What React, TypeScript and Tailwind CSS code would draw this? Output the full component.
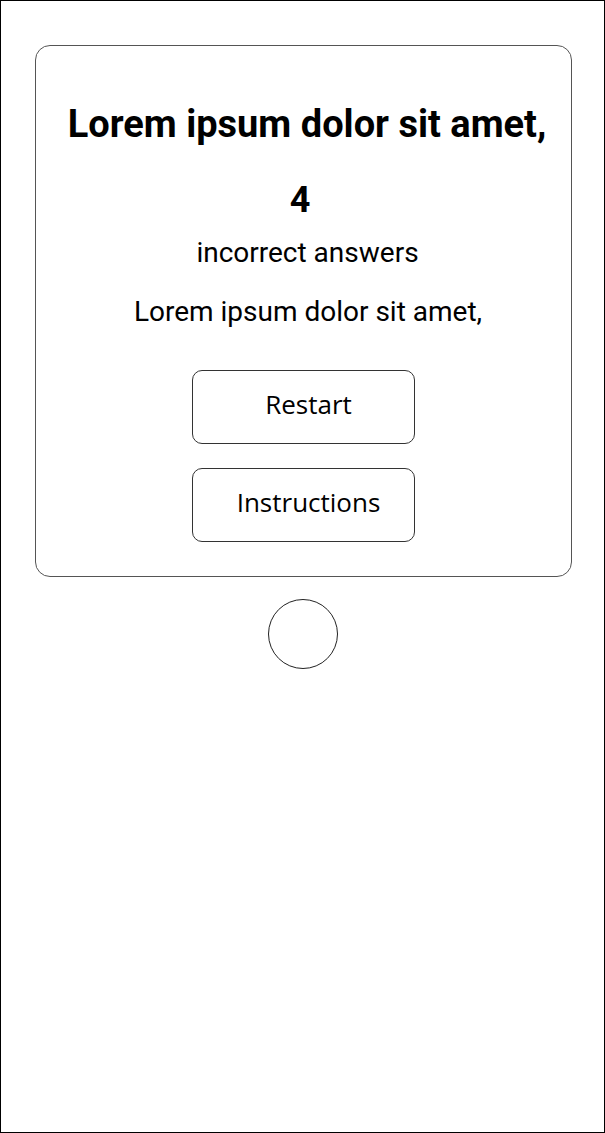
export default function App() {
  return (
    <div className="w-[605px] h-[1133px] border border-black bg-white box-border" style={{ fontFamily: "Roboto, sans-serif" }}>
      <div className="ml-[34px] mt-[44px] w-[537px] border border-[#555] rounded-[15px] flex flex-col items-center pb-[34px] box-border">
        <div className="mt-[58px] pl-[7px] text-[38px] leading-[40px] font-bold text-black">Lorem ipsum dolor sit amet,</div>
        <div className="mt-[36px] pr-[7px] text-[36px] leading-[40px] font-bold text-black">4</div>
        <div className="mt-[18px] pl-[8px] text-[28px] leading-[30px] text-black">incorrect answers</div>
        <div className="mt-[29px] pl-[9px] text-[28px] leading-[30px] text-black">Lorem ipsum dolor sit amet,</div>
        <button className="mt-[43px] w-[223px] h-[74px] border border-[#333] rounded-[10px] pl-[10px] pb-[6px] text-[26px] text-black" style={{ fontFamily: "'Open Sans', sans-serif" }}>Restart</button>
        <button className="mt-[24px] w-[223px] h-[74px] border border-[#333] rounded-[10px] pl-[10px] pb-[6px] text-[26px] text-black" style={{ fontFamily: "'Open Sans', sans-serif" }}>Instructions</button>
      </div>
      <div className="mx-auto mt-[22px] w-[70px] h-[70px] rounded-full border border-[#222]" />
    </div>
  );
}
